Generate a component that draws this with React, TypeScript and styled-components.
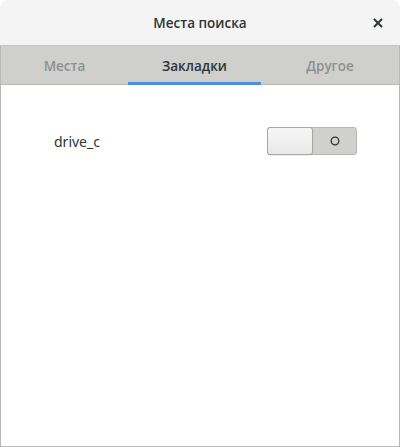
import React from "react";
import styled, { createGlobalStyle } from "styled-components";

const Global = createGlobalStyle`
  html, body { margin: 0; padding: 0; background: #ffffff; }
  body { font-family: "Noto Sans", "DejaVu Sans", sans-serif; color: #2e3436; }
`;

const Window = styled.div`
  width: 400px;
  height: 447px;
  display: flex;
  flex-direction: column;
  box-sizing: border-box;
  border-radius: 7px 7px 0 0;
  overflow: hidden;
  background: #ffffff;
`;

const HeaderBar = styled.div`
  height: 46px;
  box-sizing: border-box;
  display: grid;
  grid-template-columns: 1fr auto 1fr;
  align-items: center;
  background: #f4f4f4;
  border-bottom: 1px solid #c6c6c4;
  border-radius: 7px 7px 0 0;
  flex: none;
`;

const Title = styled.div`
  grid-column: 2;
  font-family: "Open Sans", "Noto Sans", sans-serif;
  font-size: 13.5px;
  font-weight: 600;
  color: #2e3436;
`;

const CloseButton = styled.button`
  grid-column: 3;
  justify-self: end;
  margin-right: 14px;
  width: 16px;
  height: 16px;
  padding: 0;
  border: none;
  background: transparent;
  display: flex;
  align-items: center;
  justify-content: center;
`;

const Frame = styled.div`
  flex: 1;
  display: flex;
  flex-direction: column;
  border: 1px solid #b8b8b6;
  border-top: none;
`;

const TabBar = styled.div`
  height: 38px;
  display: grid;
  grid-template-columns: 127px 133px 1fr;
  background: #cfcfcd;
  border-bottom: 1px solid #b6b6b3;
  flex: none;
`;

const Tab = styled.div<{ $active?: boolean }>`
  display: flex;
  align-items: center;
  justify-content: center;
  font-family: "Open Sans", "Noto Sans", sans-serif;
  font-size: 13.5px;
  font-weight: 600;
  color: ${(p) => (p.$active ? "#2e3436" : "#8d9091")};
  box-shadow: ${(p) => (p.$active ? "inset 0 -3px 0 #4a90d9" : "none")};
  margin-bottom: -1px;
  padding-top: 1px;
`;

const Body = styled.div`
  flex: 1;
  padding: 41px 42px 0 53px;
`;

const Row = styled.div`
  display: flex;
  align-items: center;
  justify-content: space-between;
  height: 30px;
`;

const Label = styled.span`
  font-size: 14px;
  color: #2e3436;
`;

const Switch = styled.div`
  width: 90px;
  height: 28px;
  box-sizing: border-box;
  border: 1px solid #b6b6b3;
  border-radius: 3px;
  background: #d0d0ce;
  display: flex;
  align-items: stretch;
  margin-top: -1px;
`;

const Knob = styled.div`
  width: 46px;
  margin: -1px 0 -1px -1px;
  box-sizing: border-box;
  border: 1px solid #a6a6a4;
  border-radius: 3px;
  background: linear-gradient(#f6f6f6, #e9e9e8);
  box-shadow: 0 1px 0 rgba(0, 0, 0, 0.06);
`;

const OffMark = styled.div`
  flex: 1;
  display: flex;
  align-items: center;
  justify-content: center;
`;

export default function App() {
  return (
    <>
      <Global />
      <Window>
        <HeaderBar>
          <Title>Места поиска</Title>
          <CloseButton aria-label="Закрыть">
            <svg width="10" height="10" viewBox="0 0 10 10">
              <path d="M1 1 L9 9 M9 1 L1 9" stroke="#2e3436" strokeWidth="2" strokeLinecap="butt" />
            </svg>
          </CloseButton>
        </HeaderBar>
        <Frame>
          <TabBar>
            <Tab>Места</Tab>
            <Tab $active>Закладки</Tab>
            <Tab>Другое</Tab>
          </TabBar>
          <Body>
            <Row>
              <Label>drive_c</Label>
              <Switch>
                <Knob />
                <OffMark>
                  <svg width="10" height="10" viewBox="0 0 10 10">
                    <circle cx="5" cy="5" r="3.8" fill="none" stroke="#2e3436" strokeWidth="1.3" />
                  </svg>
                </OffMark>
              </Switch>
            </Row>
          </Body>
        </Frame>
      </Window>
    </>
  );
}
